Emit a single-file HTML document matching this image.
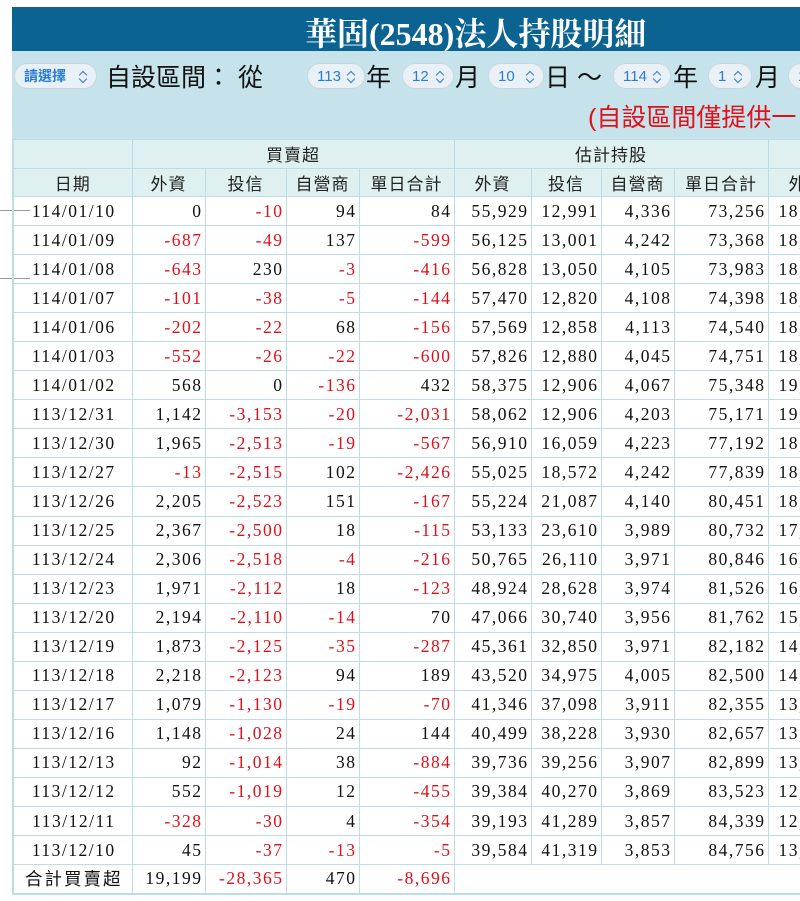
<!DOCTYPE html>
<html><head><meta charset="utf-8"><style>
body{margin:0;width:800px;height:901px;overflow:hidden;background:#fff;position:relative;font-family:"Liberation Sans","Noto Sans CJK TC",sans-serif}
.title{position:absolute;left:12px;top:7px;width:800px;height:44px;background:#0b6391;color:#fff;font:bold 32px "Liberation Serif","Noto Serif CJK SC",serif;}
.title span{position:absolute;left:293px;top:2px;white-space:nowrap}
.band{position:absolute;left:12px;top:51px;width:800px;height:88px;background:#c6e3ec}
.sel{position:absolute;top:63px;height:26px;border-radius:13px;background:#e9f1f6;border:1px solid #c9d8e2;color:#2a7bd6;font-size:15px;line-height:25px;box-sizing:border-box;padding-left:9px}
.sel:after{content:"";position:absolute;right:10px;top:8px;width:5px;height:5px;border-left:1.5px solid #2a7bd6;border-top:1.5px solid #2a7bd6;transform:rotate(45deg)}
.sel:before{content:"";position:absolute;right:10px;top:12px;width:5px;height:5px;border-right:1.5px solid #2a7bd6;border-bottom:1.5px solid #2a7bd6;transform:rotate(45deg)}
.lab{position:absolute;top:58px;font-size:25px;color:#111;white-space:nowrap}
.red{position:absolute;left:588px;top:98px;font-size:25px;color:#e0101a;white-space:nowrap}
table{position:absolute;left:12px;top:139px;width:835px;border-collapse:collapse;table-layout:fixed;border-left:2px solid #bcdde8}
td,th{border:1px solid #bcdde8;height:29.05px;padding:0 4px;white-space:nowrap;overflow:hidden;box-sizing:border-box}
th{background:#dff0f1;font-weight:normal;font-size:17px;color:#222;letter-spacing:1px;height:28.5px}
td{font:17.5px "Liberation Serif","Noto Serif CJK SC",serif;text-align:right;color:#111;letter-spacing:1.5px;padding-right:2px}
td.d{text-align:center}
td.n{color:#e0101a}
td.t{font-family:"Liberation Sans","Noto Sans CJK TC",sans-serif;text-align:center;letter-spacing:2px}
td.x{text-align:left;padding-left:10px}
.gl{position:absolute;left:0;width:30px;height:1px;background:#999}
</style></head><body>
<div class="title"><span>華固(2548)法人持股明細</span></div>
<div class="band"></div>
<div class="sel" style="left:14px;width:83px;font-size:14px;font-weight:bold">請選擇</div>
<div class="lab" style="left:106px">自設區間：&nbsp;從</div>
<div class="sel" style="left:307px;width:58px">113</div>
<div class="lab" style="left:366px">年</div>
<div class="sel" style="left:402px;width:52px">12</div>
<div class="lab" style="left:455px">月</div>
<div class="sel" style="left:488px;width:56px">10</div>
<div class="lab" style="left:545px">日 ～</div>
<div class="sel" style="left:613px;width:58px">114</div>
<div class="lab" style="left:673px">年</div>
<div class="sel" style="left:708px;width:44px">1</div>
<div class="lab" style="left:755px">月</div>
<div class="sel" style="left:788px;width:40px">1</div>
<div class="red">(自設區間僅提供一</div>
<div class="gl" style="top:210px"></div>
<div class="gl" style="top:278px"></div>
<table>
<colgroup><col style="width:119px"><col style="width:73px"><col style="width:81px"><col style="width:73px"><col style="width:95px"><col style="width:77px"><col style="width:70px"><col style="width:73px"><col style="width:94px"><col style="width:80px"></colgroup>
<tr><th></th><th colspan="4">買賣超</th><th colspan="4">估計持股</th><th></th></tr>
<tr><th>日期</th><th>外資</th><th>投信</th><th>自營商</th><th>單日合計</th><th>外資</th><th>投信</th><th>自營商</th><th>單日合計</th><th style="text-align:left;padding-left:20px">外資</th></tr>
<tr><td class="d">114/01/10</td><td>0</td><td class="n">-10</td><td>94</td><td>84</td><td>55,929</td><td>12,991</td><td>4,336</td><td>73,256</td><td class="x">18,000</td></tr>
<tr><td class="d">114/01/09</td><td class="n">-687</td><td class="n">-49</td><td>137</td><td class="n">-599</td><td>56,125</td><td>13,001</td><td>4,242</td><td>73,368</td><td class="x">18,000</td></tr>
<tr><td class="d">114/01/08</td><td class="n">-643</td><td>230</td><td class="n">-3</td><td class="n">-416</td><td>56,828</td><td>13,050</td><td>4,105</td><td>73,983</td><td class="x">18,000</td></tr>
<tr><td class="d">114/01/07</td><td class="n">-101</td><td class="n">-38</td><td class="n">-5</td><td class="n">-144</td><td>57,470</td><td>12,820</td><td>4,108</td><td>74,398</td><td class="x">18,000</td></tr>
<tr><td class="d">114/01/06</td><td class="n">-202</td><td class="n">-22</td><td>68</td><td class="n">-156</td><td>57,569</td><td>12,858</td><td>4,113</td><td>74,540</td><td class="x">18,000</td></tr>
<tr><td class="d">114/01/03</td><td class="n">-552</td><td class="n">-26</td><td class="n">-22</td><td class="n">-600</td><td>57,826</td><td>12,880</td><td>4,045</td><td>74,751</td><td class="x">18,000</td></tr>
<tr><td class="d">114/01/02</td><td>568</td><td>0</td><td class="n">-136</td><td>432</td><td>58,375</td><td>12,906</td><td>4,067</td><td>75,348</td><td class="x">19,000</td></tr>
<tr><td class="d">113/12/31</td><td>1,142</td><td class="n">-3,153</td><td class="n">-20</td><td class="n">-2,031</td><td>58,062</td><td>12,906</td><td>4,203</td><td>75,171</td><td class="x">19,000</td></tr>
<tr><td class="d">113/12/30</td><td>1,965</td><td class="n">-2,513</td><td class="n">-19</td><td class="n">-567</td><td>56,910</td><td>16,059</td><td>4,223</td><td>77,192</td><td class="x">18,000</td></tr>
<tr><td class="d">113/12/27</td><td class="n">-13</td><td class="n">-2,515</td><td>102</td><td class="n">-2,426</td><td>55,025</td><td>18,572</td><td>4,242</td><td>77,839</td><td class="x">18,000</td></tr>
<tr><td class="d">113/12/26</td><td>2,205</td><td class="n">-2,523</td><td>151</td><td class="n">-167</td><td>55,224</td><td>21,087</td><td>4,140</td><td>80,451</td><td class="x">18,000</td></tr>
<tr><td class="d">113/12/25</td><td>2,367</td><td class="n">-2,500</td><td>18</td><td class="n">-115</td><td>53,133</td><td>23,610</td><td>3,989</td><td>80,732</td><td class="x">17,000</td></tr>
<tr><td class="d">113/12/24</td><td>2,306</td><td class="n">-2,518</td><td class="n">-4</td><td class="n">-216</td><td>50,765</td><td>26,110</td><td>3,971</td><td>80,846</td><td class="x">16,000</td></tr>
<tr><td class="d">113/12/23</td><td>1,971</td><td class="n">-2,112</td><td>18</td><td class="n">-123</td><td>48,924</td><td>28,628</td><td>3,974</td><td>81,526</td><td class="x">16,000</td></tr>
<tr><td class="d">113/12/20</td><td>2,194</td><td class="n">-2,110</td><td class="n">-14</td><td>70</td><td>47,066</td><td>30,740</td><td>3,956</td><td>81,762</td><td class="x">15,000</td></tr>
<tr><td class="d">113/12/19</td><td>1,873</td><td class="n">-2,125</td><td class="n">-35</td><td class="n">-287</td><td>45,361</td><td>32,850</td><td>3,971</td><td>82,182</td><td class="x">14,000</td></tr>
<tr><td class="d">113/12/18</td><td>2,218</td><td class="n">-2,123</td><td>94</td><td>189</td><td>43,520</td><td>34,975</td><td>4,005</td><td>82,500</td><td class="x">14,000</td></tr>
<tr><td class="d">113/12/17</td><td>1,079</td><td class="n">-1,130</td><td class="n">-19</td><td class="n">-70</td><td>41,346</td><td>37,098</td><td>3,911</td><td>82,355</td><td class="x">13,000</td></tr>
<tr><td class="d">113/12/16</td><td>1,148</td><td class="n">-1,028</td><td>24</td><td>144</td><td>40,499</td><td>38,228</td><td>3,930</td><td>82,657</td><td class="x">13,000</td></tr>
<tr><td class="d">113/12/13</td><td>92</td><td class="n">-1,014</td><td>38</td><td class="n">-884</td><td>39,736</td><td>39,256</td><td>3,907</td><td>82,899</td><td class="x">13,000</td></tr>
<tr><td class="d">113/12/12</td><td>552</td><td class="n">-1,019</td><td>12</td><td class="n">-455</td><td>39,384</td><td>40,270</td><td>3,869</td><td>83,523</td><td class="x">12,000</td></tr>
<tr><td class="d">113/12/11</td><td class="n">-328</td><td class="n">-30</td><td>4</td><td class="n">-354</td><td>39,193</td><td>41,289</td><td>3,857</td><td>84,339</td><td class="x">12,000</td></tr>
<tr><td class="d">113/12/10</td><td>45</td><td class="n">-37</td><td class="n">-13</td><td class="n">-5</td><td>39,584</td><td>41,319</td><td>3,853</td><td>84,756</td><td class="x">13,000</td></tr>
<tr style="border-bottom:2px solid #bcdde8"><td class="t">合計買賣超</td><td>19,199</td><td class="n">-28,365</td><td>470</td><td class="n">-8,696</td><td colspan="5" style="border-right:none"></td></tr>
</table>
</body></html>
